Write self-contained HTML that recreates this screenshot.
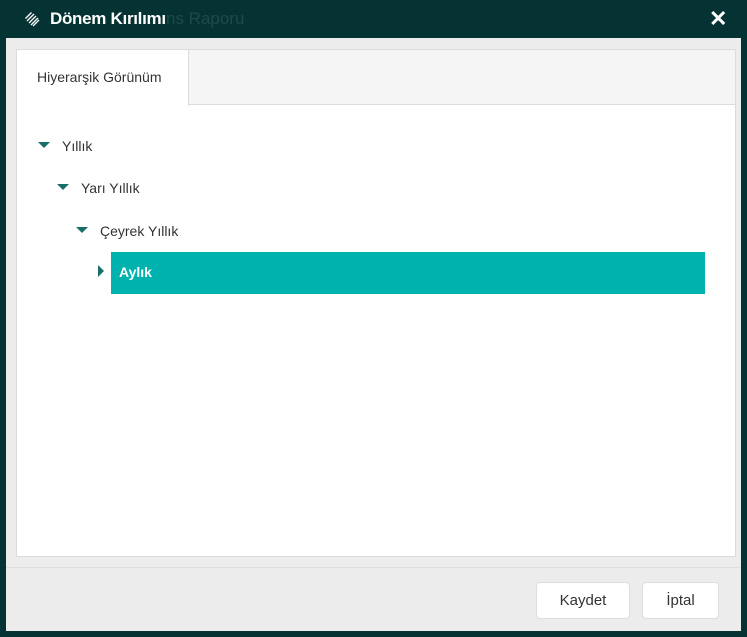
<!DOCTYPE html>
<html><head><meta charset="utf-8"><style>
*{margin:0;padding:0;box-sizing:border-box}
body{width:747px;height:637px;background:#053232;font-family:"Liberation Sans",sans-serif;position:relative;overflow:hidden}
.ghost{position:absolute;left:166px;top:9px;font-size:17px;color:#1d4b49}
.title{position:absolute;left:50px;top:9px;font-size:17px;font-weight:bold;color:#fff;letter-spacing:-0.3px}
.x{position:absolute;left:709px;top:6px;font-size:22px;font-weight:bold;color:#fff}
.body{position:absolute;left:6px;top:38px;width:735px;height:593px;background:#ececec}
.panel{position:absolute;left:10px;top:11px;width:720px;height:508px;background:#fff;border:1px solid #dcdcdc}
.tabbar{position:absolute;left:0;top:0;right:0;height:55px;background:#f5f5f5;border-bottom:1px solid #dcdcdc}
.tab{position:absolute;left:0;top:0;width:172px;height:56px;background:#fff;border-right:1px solid #dcdcdc;font-size:14px;color:#333;padding:19px 0 0 20px}
.node{position:absolute;font-size:14px;color:#333}
.tri{position:absolute;width:0;height:0;border-left:6px solid transparent;border-right:6px solid transparent;border-top:6px solid #1a6e6a}
.sel{position:absolute;left:94px;top:202px;width:594px;height:42px;background:#00b2ae;color:#fff;font-weight:bold;font-size:14px;padding:12px 0 0 8px}
.sep{position:absolute;left:0;right:0;top:529px;border-top:1px solid #dedede}
.btn{position:absolute;top:544px;height:37px;background:#fff;border:1px solid #ddd;border-radius:4px;font-size:15px;color:#333;text-align:center;line-height:35px}
</style></head><body>
<svg style="position:absolute;left:24px;top:11px" width="16" height="16" viewBox="0 0 16 16"><g stroke="#fff" stroke-width="1.3"><line x1="1.5" y1="7.5" x2="7.5" y2="1.5"/><line x1="3" y1="10" x2="10" y2="3"/><line x1="5" y1="12" x2="12" y2="5"/><line x1="7" y1="14" x2="14" y2="7"/><line x1="9" y1="15" x2="15" y2="9"/></g></svg>
<div class="ghost">ns Raporu</div>
<div class="title">Dönem Kırılımı</div>
<div class="x">✕</div>
<div class="body">
<div class="panel">
<div class="tabbar"><div class="tab">Hiyerarşik Görünüm</div></div>
<div class="tri" style="left:21px;top:92px"></div><div class="node" style="left:45px;top:88px">Yıllık</div>
<div class="tri" style="left:40px;top:134px"></div><div class="node" style="left:64px;top:130px">Yarı Yıllık</div>
<div class="tri" style="left:59px;top:177px"></div><div class="node" style="left:83px;top:173px">Çeyrek Yıllık</div>
<div style="position:absolute;left:81px;top:215px;width:0;height:0;border-top:6px solid transparent;border-bottom:6px solid transparent;border-left:6px solid #1a6e6a"></div>
<div class="sel">Aylık</div>
</div>
<div class="sep"></div>
<div class="btn" style="left:530px;width:94px">Kaydet</div>
<div class="btn" style="left:636px;width:77px">İptal</div>
</div>
</body></html>
